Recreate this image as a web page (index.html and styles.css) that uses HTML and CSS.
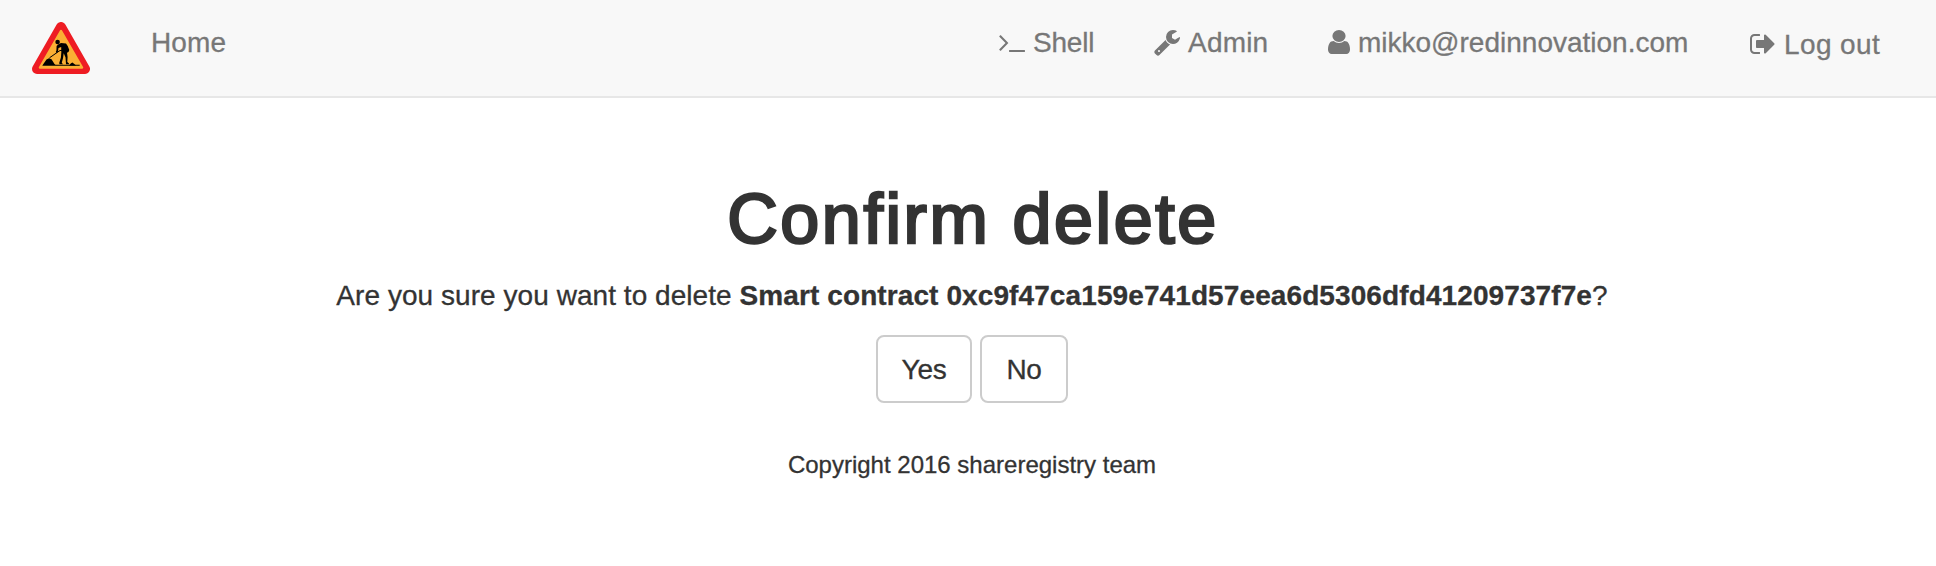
FILE: index.html
```html
<!DOCTYPE html>
<html lang="en">
<head>
<meta charset="utf-8">
<title>Confirm delete</title>
<link rel="stylesheet" href="styles.css">
</head>
<body>
<header class="navbar">
  <a class="brand">
    <svg class="logo" viewBox="0 0 58 52">
      <path d="M29 5 53 47H5Z" fill="#ee1c23" stroke="#ee1c23" stroke-width="10" stroke-linejoin="round"/>
      <path d="M29 9 50 45.500H8Z" fill="#fbb034" stroke="#fbb034" stroke-width="2.500" stroke-linejoin="round"/>
      <path d="M10.500 43.300 14.500 37.500 17 36.200l2.500 1L22.500 42l1 .7H47.700v1H10.500z"/>
      <path d="M37 43.500 39 41.200l1.500-.8 1.500 1.300 2 1.800z"/>
      <circle cx="25.600" cy="20" r="2.300"/>
      <path d="M26 22.500 29 21l5 .6 1.700 2.400 1.600 4-.8 2-1.500.8.600 4.200-.3 5 1.700 1.500v.8H34l-.5-7-1.800-4-.7 5-1.200 4.500 1.200 1.400H27.500l-.3-1.200 1.700-5.500.4-5-.1-5.500-2.700 1-.5 3.500-1.500 1.500-.7-1 .6-1.500.2-4.500z"/>
      <path d="M35.500 28 28 28.500 17.500 35.800" fill="none" stroke="#000" stroke-width="1"/>
    </svg>
  </a>
  <a class="nav-item home">Home</a>
  <nav class="nav-right">
    <a class="nav-item shell">
      <svg class="icon" viewBox="0 0 1792 1792"><path d="M649 983l-466 466q-10 10-23 10t-23-10l-50-50q-10-10-10-23t10-23l393-393-393-393q-10-10-10-23t10-23l50-50q10-10 23-10t23 10l466 466q10 10 10 23t-10 23zm1079 457v64q0 14-9 23t-23 9h-960q-14 0-23-9t-9-23v-64q0-14 9-23t23-9h960q14 0 23 9t9 23z"/></svg>
      <span>Shell</span>
    </a>
    <a class="nav-item admin">
      <svg class="icon" viewBox="0 0 1792 1792"><path d="M448 1472q0-26-19-45t-45-19-45 19-19 45 19 45 45 19 45-19 19-45zm644-420l-682 682q-37 37-90 37-52 0-91-37l-106-108q-38-36-38-90 0-53 38-91l681-681q39 98 114.500 173.500t173.500 114.500zm634-435q0 39-23 106-47 134-164.500 217.500t-258.500 83.500q-185 0-316.500-131.500t-131.500-316.500 131.500-316.500 316.500-131.500q58 0 121.500 16.500t107.500 46.500q16 11 16 28t-16 28l-293 169v224l193 107q5-3 79-48.500t135.500-81 70.500-35.500q15 0 23.500 10t8.500 25z"/></svg>
      <span>Admin</span>
    </a>
    <a class="nav-item user">
      <svg class="icon icon-user" viewBox="256 0 1280 1792" preserveAspectRatio="none"><path d="M1536 1399q0 109-62.500 187t-150.500 78h-854q-88 0-150.500-78t-62.500-187q0-85 8.500-160.500t31.500-152 58.500-131 94-89 134.500-34.500q131 128 313 128t313-128q76 0 134.500 34.500t94 89 58.500 131 31.500 152 8.500 160.500zm-256-887q0 159-112.500 271.500t-271.500 112.500-271.500-112.500-112.500-271.500 112.500-271.500 271.500-112.500 271.500 112.500 112.500 271.500z"/></svg>
      <span>mikko@redinnovation.com</span>
    </a>
    <a class="nav-item logout">
      <svg class="icon" viewBox="0 0 1792 1792"><path d="M704 1440q0 4 1 20t.5 26.500-3 23.500-10 19.500-20.500 6.500h-320q-119 0-203.500-84.500t-84.500-203.500v-704q0-119 84.500-203.500t203.500-84.500h320q13 0 22.500 9.500t9.500 22.500q0 4 1 20t.5 26.500-3 23.500-10 19.500-20.500 6.500h-320q-66 0-113 47t-47 113v704q0 66 47 113t113 47h312l11.500 1 11.500 3 8 5.500 7 9 2 13.500zm928-544q0 26-19 45l-544 544q-19 19-45 19t-45-19-19-45v-288h-448q-26 0-45-19t-19-45v-384q0-26 19-45t45-19h448v-288q0-26 19-45t45-19 45 19l544 544q19 19 19 45z"/></svg>
      <span>Log out</span>
    </a>
  </nav>
</header>
<main class="content">
  <h1 class="title">Confirm delete</h1>
  <p class="message">Are you sure you want to delete <strong>Smart contract 0xc9f47ca159e741d57eea6d5306dfd41209737f7e</strong>?</p>
  <div class="actions">
    <button class="btn yes">Yes</button>
    <button class="btn no">No</button>
  </div>
</main>
<footer class="footer">Copyright 2016 shareregistry team</footer>
</body>
</html>
```
FILE: styles.css
```css
* { box-sizing: border-box; }
body {
  margin: 0;
  background: #fff;
  color: #333;
  font-family: "Liberation Sans", Arial, sans-serif;
  font-size: 28px;
  -webkit-text-stroke: 0.3px currentColor;
  overflow: hidden;
}
.navbar {
  display: flex;
  align-items: flex-start;
  height: 98px;
  padding-left: 32px;
  background: #f8f8f8;
  border-bottom: 2px solid #e7e7e7;
}
.brand { padding-top: 22px; }
.logo { display: block; width: 58px; height: 52px; }
.nav-item {
  display: flex;
  padding-top: 28px;
  line-height: 29px;
  color: #777;
  white-space: nowrap;
}
.home { margin-left: 61px; letter-spacing: 0.1px; }
.nav-right {
  display: flex;
  margin-left: auto;
  padding-right: 55px;
}
.icon {
  width: 28px;
  height: 28px;
  margin-right: 7px;
  fill: currentColor;
}
.icon-user { width: 22px; margin-right: 8px; }
.shell { width: 155px; letter-spacing: -0.2px; }
.admin { width: 175px; letter-spacing: 0.2px; }
.user { width: 421px; }
.logout { width: 132px; padding-top: 30px; letter-spacing: 0.4px; }
.content {
  padding: 81px 0 0 8px;
  text-align: center;
}
.title {
  margin: 0 0 0 2px;
  font-size: 70px;
  font-weight: 400;
  line-height: 80px;
  letter-spacing: 2.6px;
  -webkit-text-stroke: 2.6px #333;
}
.message {
  margin: 17px 0 0;
  line-height: 40px;
  letter-spacing: 0.05px;
  white-space: nowrap;
}
.message strong { letter-spacing: 0.1px; }
.actions {
  display: flex;
  justify-content: center;
  gap: 8px;
  margin-top: 19px;
}
.btn {
  height: 68px;
  padding: 1px 0 0;
  border: 2px solid #ccc;
  border-radius: 8px;
  background: #fff;
  color: #333;
  font: 28px/40px "Liberation Sans", Arial, sans-serif;
  letter-spacing: -0.3px;
}
.yes { width: 96px; }
.no { width: 88px; }
.footer {
  margin-top: 45px;
  padding-left: 8px;
  font-size: 24px;
  line-height: 34px;
  text-align: center;
}
```
